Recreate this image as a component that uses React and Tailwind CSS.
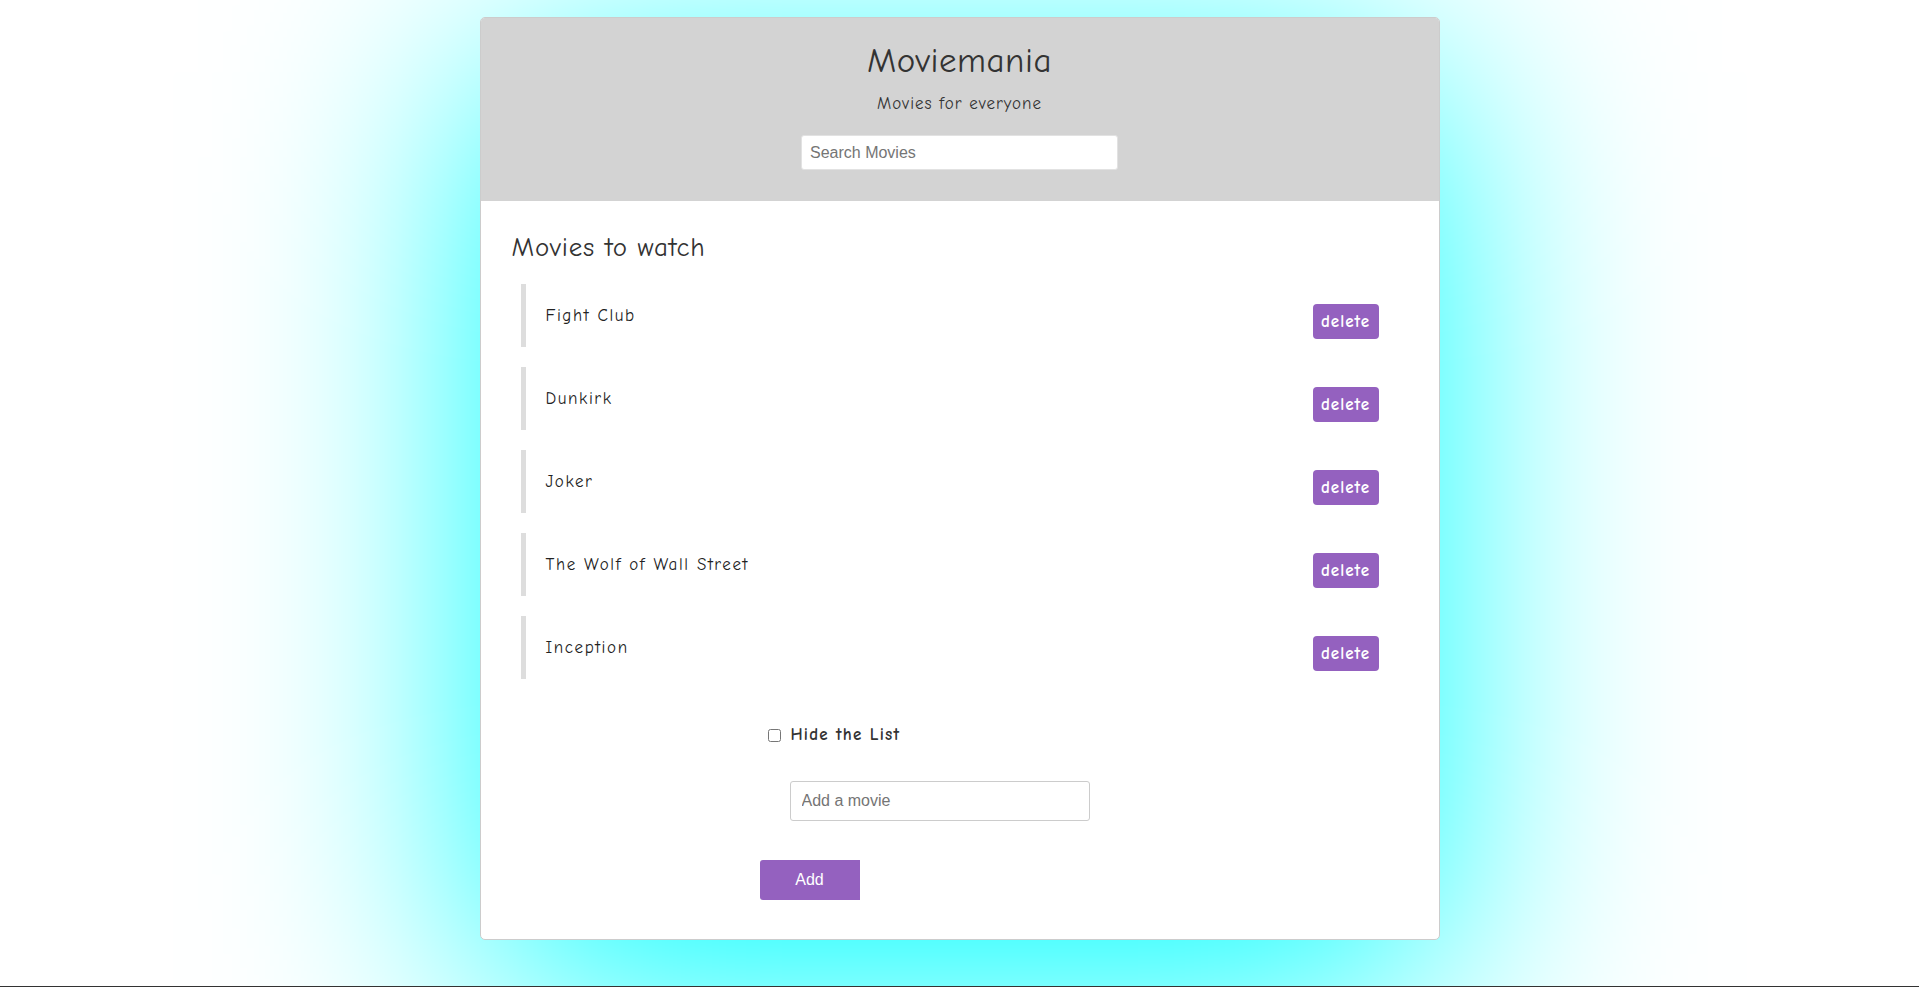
import { useState } from 'react';

const comic = "font-['Comic_Sans_MS','Comic_Neue','Open_Sans',sans-serif]";

export default function App() {
  const [movies, setMovies] = useState(['Fight Club', 'Dunkirk', 'Joker', 'The Wolf of Wall Street', 'Inception']);
  const [search, setSearch] = useState('');
  const [hidden, setHidden] = useState(false);
  const [newMovie, setNewMovie] = useState('');

  const handleAdd = (e) => {
    e.preventDefault();
    if (!newMovie.trim()) return;
    setMovies([...movies, newMovie.trim()]);
    setNewMovie('');
  };

  const visible = movies.filter((m) => m.toLowerCase().includes(search.toLowerCase()));

  return (
    <div className={`h-[987px] bg-white flex flex-col items-center ${comic}`}>
      <div className="w-[960px] mt-[17px] bg-white border border-[#cccccc] rounded-[5px] overflow-hidden shadow-[0_55px_260px_#00ffff]">
        <header className="h-[183px] bg-[#d3d3d3] flex flex-col items-center pt-[23px]">
          <h1 className="text-[35px] leading-[40px] tracking-[0.5px] text-[#333333]">Moviemania</h1>
          <p className="mt-[13px] text-[17px] leading-[20px] tracking-[1px] text-[#333333]">Movies for everyone</p>
          <input
            type="text"
            value={search}
            onChange={(e) => setSearch(e.target.value)}
            placeholder="Search Movies"
            className="mt-[21px] w-[317px] h-[35px] px-[8px] bg-white border border-[#e2e2e2] rounded-[3px] font-['Liberation_Sans',Arial,sans-serif] text-[16px] text-[#333] placeholder:text-[#757575] outline-none"
          />
        </header>

        <div className="px-[31px] pt-[31px] pb-[39px]">
          <h2 className="text-[27px] leading-[32px] tracking-[0.8px] text-[#333333]">Movies to watch</h2>

          {!hidden && (
            <ul className="mt-[20px] ml-[9px] mr-[29px] flex flex-col gap-[20px]">
              {visible.map((movie) => (
                <li key={movie} className="h-[63px] border-l-[5px] border-[#dddddd] pl-[20px] flex justify-between">
                  <span className="self-center text-[17px] leading-[20px] tracking-[1.6px] text-[#222222]">{movie}</span>
                  <button
                    type="button"
                    onClick={() => setMovies(movies.filter((m) => m !== movie))}
                    className="mt-[20px] w-[66px] h-[35px] bg-[#9461bf] rounded-[4px] text-white text-[17px] font-bold tracking-[1px]"
                  >
                    delete
                  </button>
                </li>
              ))}
            </ul>
          )}

          <form onSubmit={handleAdd} className="flex flex-col items-start">
            <label className="mt-[46px] ml-[256px] h-[20px] flex items-center gap-[10px] text-[17px] font-semibold tracking-[1.2px] text-[#333333]">
              <input
                type="checkbox"
                checked={hidden}
                onChange={(e) => setHidden(e.target.checked)}
                className="w-[13px] h-[13px]"
              />
              Hide the List
            </label>
            <input
              type="text"
              value={newMovie}
              onChange={(e) => setNewMovie(e.target.value)}
              placeholder="Add a movie"
              className="mt-[36px] ml-[278px] w-[300px] h-[40px] pl-[11px] border border-[#cccccc] rounded-[3px] font-['Liberation_Sans',Arial,sans-serif] text-[16px] text-[#333] placeholder:text-[#757575] outline-none"
            />
            <button
              type="submit"
              className="mt-[39px] ml-[248px] w-[100px] h-[40px] bg-[#9461bf] rounded-l-[3px] text-white font-['Liberation_Sans',Arial,sans-serif] text-[16px]"
            >
              Add
            </button>
          </form>
        </div>
      </div>
      <div className="flex-1" />
      <div className="w-full h-[1px] bg-[#333333]" />
    </div>
  );
}
